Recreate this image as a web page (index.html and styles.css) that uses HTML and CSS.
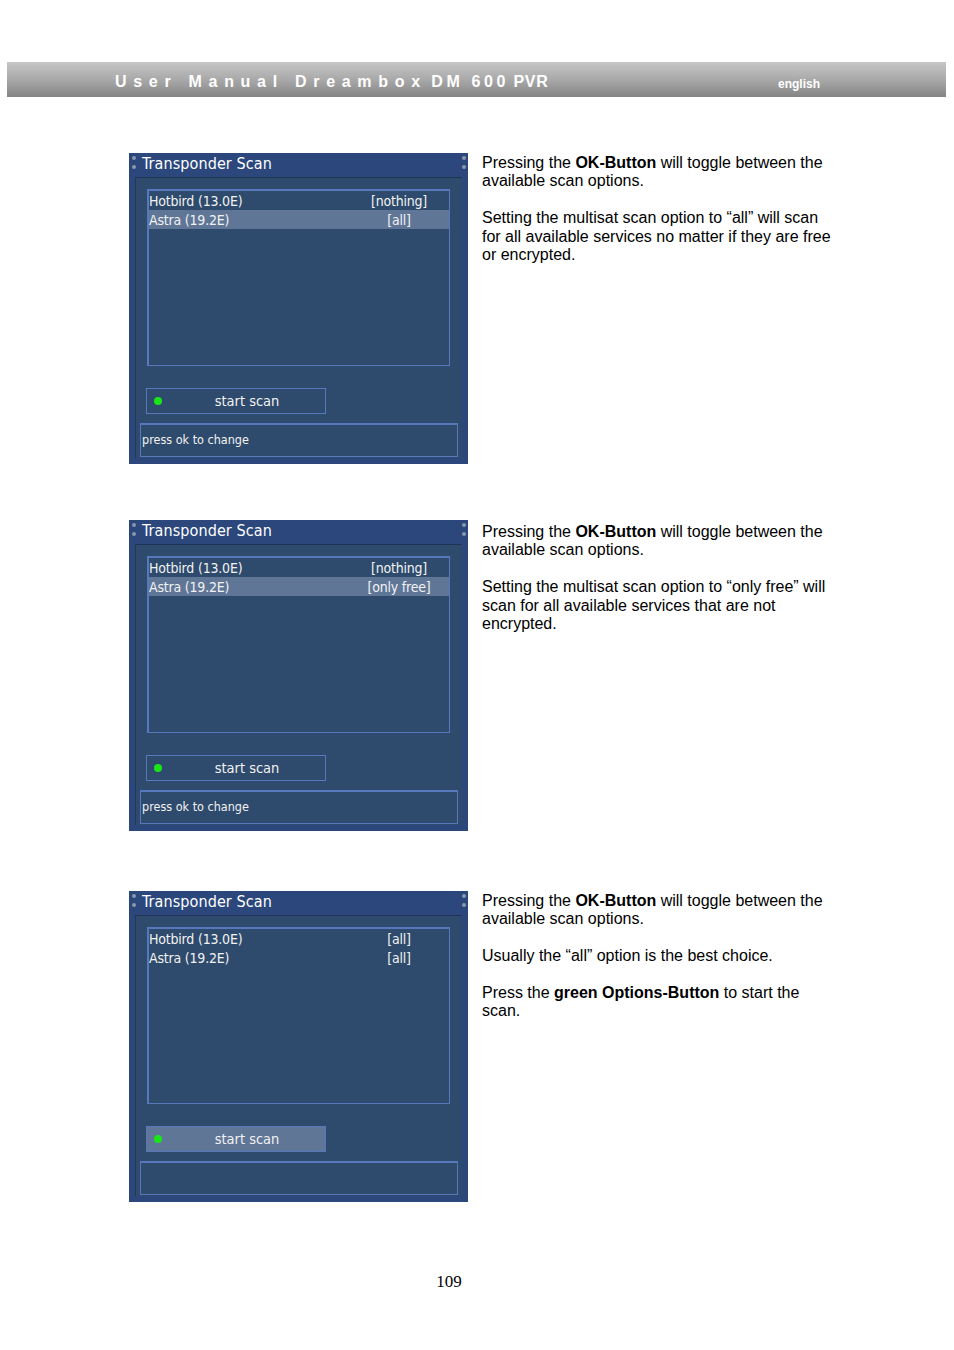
FILE: index.html
```html
<!DOCTYPE html>
<html>
<head>
<meta charset="utf-8">
<link rel="stylesheet" href="styles.css">
</head>
<body>
<div class="header">
  <span class="h-title"><span class="sp1">User Manual Dreambox</span> <span class="sp2">DM 600</span> <span class="sp3">PVR</span></span>
  <span class="h-lang">english</span>
</div>

<div class="section s1">
  <div class="panel">
    <div class="titlebar"><span class="screws"><i></i><i></i></span><span class="title">Transponder Scan</span><span class="screws"><i></i><i></i></span></div>
    <div class="body">
      <div class="list">
        <div class="row"><span class="name">Hotbird (13.0E)</span><span class="val">[nothing]</span></div>
        <div class="row sel"><span class="name">Astra (19.2E)</span><span class="val">[all]</span></div>
      </div>
      <div class="btn"><span class="dot"></span><span class="btn-label">start scan</span></div>
      <div class="status">press ok to change</div>
    </div>
  </div>
  <div class="text">
    <p>Pressing the <b>OK-Button</b> will toggle between the available scan options.</p>
    <p>Setting the multisat scan option to “all” will scan for all available services no matter if they are free or encrypted.</p>
  </div>
</div>

<div class="section s2">
  <div class="panel">
    <div class="titlebar"><span class="screws"><i></i><i></i></span><span class="title">Transponder Scan</span><span class="screws"><i></i><i></i></span></div>
    <div class="body">
      <div class="list">
        <div class="row"><span class="name">Hotbird (13.0E)</span><span class="val">[nothing]</span></div>
        <div class="row sel"><span class="name">Astra (19.2E)</span><span class="val">[only free]</span></div>
      </div>
      <div class="btn"><span class="dot"></span><span class="btn-label">start scan</span></div>
      <div class="status">press ok to change</div>
    </div>
  </div>
  <div class="text t2">
    <p>Pressing the <b>OK-Button</b> will toggle between the available scan options.</p>
    <p>Setting the multisat scan option to “only free” will scan for all available services that are not encrypted.</p>
  </div>
</div>

<div class="section s3">
  <div class="panel">
    <div class="titlebar"><span class="screws"><i></i><i></i></span><span class="title">Transponder Scan</span><span class="screws"><i></i><i></i></span></div>
    <div class="body">
      <div class="list">
        <div class="row"><span class="name">Hotbird (13.0E)</span><span class="val">[all]</span></div>
        <div class="row"><span class="name">Astra (19.2E)</span><span class="val">[all]</span></div>
      </div>
      <div class="btn sel"><span class="dot"></span><span class="btn-label">start scan</span></div>
      <div class="status"></div>
    </div>
  </div>
  <div class="text">
    <p>Pressing the <b>OK-Button</b> will toggle between the available scan options.</p>
    <p>Usually the “all” option is the best choice.</p>
    <p>Press the <b>green Options-Button</b> to start the scan.</p>
  </div>
</div>

<div class="pagenum">109</div>
</body>
</html>
```

FILE: styles.css
```css
html, body {
  margin: 0;
  padding: 0;
  background: #ffffff;
}
body {
  width: 954px;
  height: 1350px;
  overflow: hidden;
  font-family: "Liberation Sans", Arial, sans-serif;
}
.header {
  margin: 62px 0 0 7px;
  width: 939px;
  height: 35px;
  box-sizing: border-box;
  background: linear-gradient(to bottom, #c6c6c6 0%, #a9a9a9 50%, #848484 100%);
  display: flex;
  align-items: center;
  padding-left: 108px;
  color: #ffffff;
  font-weight: bold;
}
.h-title {
  font-size: 16px;
  white-space: nowrap;
  width: 663px;
  flex: none;
  margin-top: 4px;
}
.sp1 { letter-spacing: 6.7px; }
.sp2 { letter-spacing: 3.6px; }
.sp3 { letter-spacing: 0.8px; }
.h-lang {
  font-size: 12px;
  margin-top: 9px;
}
.section {
  display: flex;
  margin-left: 129px;
  gap: 14px;
  align-items: flex-start;
}
.s1 { margin-top: 56px; }
.s2 { margin-top: 56px; }
.s3 { margin-top: 60px; }
.panel {
  width: 339px;
  height: 311px;
  box-sizing: border-box;
  background: #2b477b;
  padding: 0 6px 6px 6px;
  display: flex;
  flex-direction: column;
  flex: none;
  font-family: "DejaVu Sans Condensed", "DejaVu Sans", sans-serif;
  color: #f2f2f2;
}
.titlebar {
  height: 24px;
  display: flex;
  align-items: flex-start;
  margin: 0 -6px;
  flex: none;
}
.screws {
  display: flex;
  flex-direction: column;
  gap: 5px;
  padding-top: 3px;
  width: 9px;
  align-items: center;
  flex: none;
}
.screws i {
  display: block;
  width: 4px;
  height: 4px;
  border-radius: 50%;
  background: #8a96aa;
}
.title {
  flex: 1;
  font-size: 16px;
  line-height: 21px;
  padding-left: 4px;
  color: #ffffff;
  letter-spacing: 0.1px;
}
.body {
  flex: 1;
  background: #2e4a6c;
  border-top: 1px solid #1f3454;
  border-left: 1px solid #22385a;
  display: flex;
  flex-direction: column;
}
.list {
  margin: 11px 0 0 11px;
  width: 303px;
  height: 177px;
  box-sizing: border-box;
  border: 2px solid #5878bd;
  border-right-width: 1px;
  border-bottom-width: 1px;
  flex: none;
}
.row {
  height: 19px;
  display: flex;
  align-items: center;
  font-size: 14px;
  letter-spacing: -0.2px;
  white-space: nowrap;
}
.row.sel { background: #5f7697; }
.name {
  width: 210px;
  flex: none;
}
.val {
  width: 80px;
  flex: none;
  text-align: center;
}
.btn {
  margin: 22px 0 0 10px;
  width: 180px;
  height: 26px;
  box-sizing: border-box;
  border: 1px solid #5878bd;
  display: flex;
  align-items: center;
  padding-left: 7px;
  flex: none;
}
.btn.sel { background: #5f7697; }
.dot {
  width: 8px;
  height: 8px;
  border-radius: 50%;
  background: #19e619;
  flex: none;
}
.btn-label {
  flex: 1;
  text-align: center;
  font-size: 14.5px;
  padding-left: 7px;
}
.status {
  margin: 9px 0 0 4px;
  width: 318px;
  height: 34px;
  box-sizing: border-box;
  border: 1px solid #5878bd;
  border-top: 2px solid #5878bd;
  display: flex;
  align-items: center;
  font-size: 12.5px;
  padding-left: 1px;
  padding-bottom: 3px;
  flex: none;
}
.text {
  width: 352px;
  font-size: 16px;
  line-height: 18.4px;
  color: #000000;
  padding-top: 1px;
}
.text.t2 { padding-top: 3px; }
.text p {
  margin: 0 0 18.4px 0;
}
.pagenum {
  margin-top: 70px;
  text-align: center;
  font-family: "Liberation Serif", "Times New Roman", serif;
  font-size: 17px;
  width: 898px;
}
```
